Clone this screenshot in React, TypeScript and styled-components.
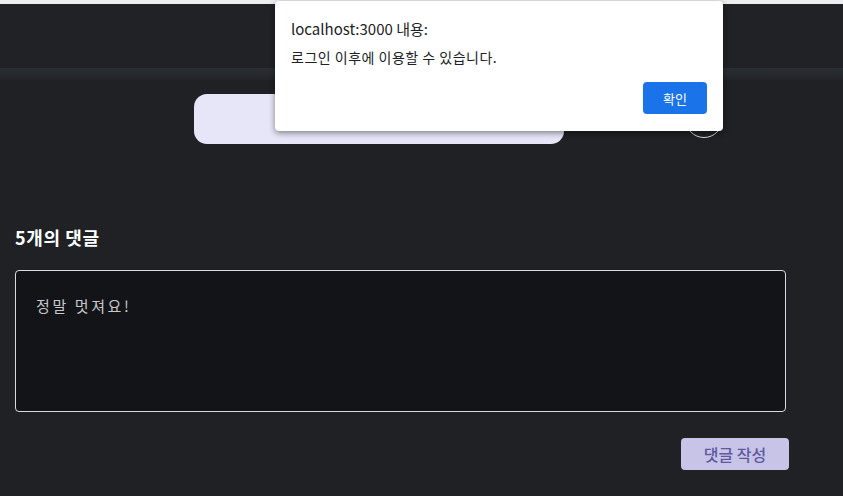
import React from 'react';
import styled, { createGlobalStyle } from 'styled-components';

const GlobalStyle = createGlobalStyle`
  html, body {
    margin: 0;
    padding: 0;
    background: #202125;
    font-family: 'Noto Sans CJK KR', 'Noto Sans', sans-serif;
  }
  * { box-sizing: border-box; }
`;

function App() {
  return (
    <>
      <GlobalStyle />
      <Page>
        <TopStrip />
        <Header />
        <HeaderShade />
        <SearchRow>
          <SearchBox />
          <CircleButton />
        </SearchRow>
        <CommentSection>
          <Title>5개의 댓글</Title>
          <CommentInput defaultValue="정말 멋져요!" />
          <Actions>
            <SubmitButton>댓글 작성</SubmitButton>
          </Actions>
        </CommentSection>
        <Dialog>
          <DialogTitle>localhost:3000 내용:</DialogTitle>
          <DialogMessage>로그인 이후에 이용할 수 있습니다.</DialogMessage>
          <DialogFooter>
            <ConfirmButton>확인</ConfirmButton>
          </DialogFooter>
        </Dialog>
      </Page>
    </>
  );
}

export default App;

const Page = styled.div`
  position: relative;
  width: 843px;
  height: 496px;
  overflow: hidden;
  background: #202125;
`;

const TopStrip = styled.div`
  height: 4px;
  background: #eeeeee;
`;

const Header = styled.div`
  height: 64px;
  background: #202226;
`;

const HeaderShade = styled.div`
  height: 12px;
  background: linear-gradient(#2b2f35, #222428);
`;

const SearchRow = styled.div`
  display: flex;
  align-items: center;
  height: 50px;
  margin-top: 14px;
  padding-left: 194px;
`;

const SearchBox = styled.div`
  width: 370px;
  height: 50px;
  border-radius: 13px;
  background: #e6e6f8;
`;

const CircleButton = styled.div`
  width: 38px;
  height: 38px;
  margin-left: 121px;
  border-radius: 50%;
  border: 1.5px solid #d8d8e0;
`;

const CommentSection = styled.div`
  padding: 82px 57px 0 15px;
`;

const Title = styled.h2`
  margin: 0;
  font-size: 18px;
  font-weight: 700;
  letter-spacing: 0.6px;
  line-height: 22px;
  color: #ffffff;
`;

const CommentInput = styled.textarea`
  display: block;
  width: 771px;
  height: 142px;
  margin-top: 22px;
  padding: 24px 20px;
  resize: none;
  border: 1px solid #d9d9e3;
  border-radius: 4px;
  background: #131417;
  color: #c8c8cc;
  font-family: 'Noto Sans CJK KR', sans-serif;
  font-size: 15px;
  letter-spacing: 2.6px;
  outline: none;
`;

const Actions = styled.div`
  display: flex;
  justify-content: flex-end;
  margin-top: 26px;
`;

const SubmitButton = styled.button`
  width: 108px;
  height: 32px;
  border: none;
  border-radius: 4px;
  background: #c8c4e8;
  color: #5f5a9e;
  font-family: 'Noto Sans CJK KR', sans-serif;
  font-size: 16px;
  font-weight: 500;
  margin-right: -3px;
`;

const Dialog = styled.div`
  position: absolute;
  top: 1px;
  left: 275px;
  width: 448px;
  height: 130px;
  background: #ffffff;
  border-radius: 4px;
  box-shadow: 0 2px 6px rgba(0, 0, 0, 0.45);
  padding: 18px 16px 0 16px;
`;

const DialogTitle = styled.div`
  font-family: 'Noto Sans CJK KR', sans-serif;
  font-size: 15px;
  line-height: 20px;
  color: #202124;
`;

const DialogMessage = styled.div`
  margin-top: 9px;
  font-family: 'Noto Sans CJK KR', sans-serif;
  font-size: 14px;
  letter-spacing: 0.5px;
  line-height: 18px;
  color: #202124;
`;

const DialogFooter = styled.div`
  display: flex;
  justify-content: flex-end;
  margin-top: 16px;
`;

const ConfirmButton = styled.button`
  width: 64px;
  height: 32px;
  border: none;
  border-radius: 4px;
  background: #1a73e8;
  color: #ffffff;
  font-family: 'Noto Sans CJK KR', sans-serif;
  font-size: 13px;
`;
